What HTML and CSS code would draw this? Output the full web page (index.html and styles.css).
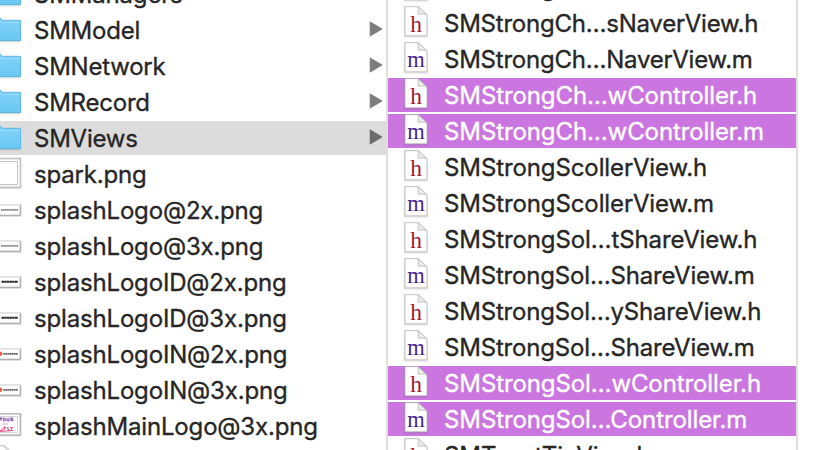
FILE: index.html
```
<!DOCTYPE html>
<html lang="en">
<head>
<meta charset="utf-8">
<title>Files</title>
<link rel="stylesheet" href="styles.css">
</head>
<body>
<svg class="defs" width="0" height="0" aria-hidden="true">
  <defs>
    <linearGradient id="blue" x1="0" y1="0" x2="0" y2="1"><stop offset="0" stop-color="#84d4f9"/><stop offset="1" stop-color="#68c6f3"/></linearGradient>
    <linearGradient id="fold" x1="0" y1="1" x2="1" y2="0"><stop offset="0" stop-color="#e4e4e4"/><stop offset="1" stop-color="#fff"/></linearGradient>
    <symbol id="folder" viewBox="0 0 24 34">
      <path d="M0 28.5H20.5" stroke="#000" stroke-opacity=".13" stroke-width="2"/>
      <path d="M0 5L2.5 7.3H20Q21 7.3 21 8.3V27Q21 28 20 28H0Z" fill="url(#blue)"/>
      <path d="M0 5L2.5 7.3H20.5" fill="none" stroke="#5bb4e0"/>
      <path d="M0 9.5H20.5" stroke="#a0e0fc" stroke-width=".7"/>
      <path d="M20.6 8V27.5H0" fill="none" stroke="#57b2df" stroke-width=".8"/>
    </symbol>
    <symbol id="page" viewBox="0 0 28 34">
      <path d="M4.8 1H18L26.8 9.5V30.5H4.8Z" fill="none" stroke="#000" stroke-opacity=".12" stroke-width="2"/>
      <path d="M5 .7H18.2L27 9.3V29.8H5Z" fill="#fff" stroke="#b9b9b9" stroke-width=".8"/>
      <path d="M18.2 1V8.2H26.2Z" fill="url(#fold)" stroke="#bdbdbd" stroke-width=".8"/>
    </symbol>
    <symbol id="strip" viewBox="0 0 24 34">
      <path d="M0 12.2H20.5V22.8H0" fill="none" stroke="#000" stroke-opacity=".16" stroke-width="2"/>
      <path d="M0 12.5H20V22H0Z" fill="#fff"/>
      <path d="M20.2 12.5V22.2H0" fill="none" stroke="#777" stroke-opacity=".65" stroke-width=".9"/>
    </symbol>
  </defs>
</svg>
<main class="browser">
  <section class="column folders">
    <div class="row"><svg class="thumb"><use href="#folder"/></svg><span class="name">SMManagers</span></div>
    <div class="row"><svg class="thumb"><use href="#folder"/></svg><span class="name tight">SMModel</span><svg class="arrow" viewBox="0 0 12 14"><path d="M1 1L11 7L1 13Z"/></svg></div>
    <div class="row"><svg class="thumb"><use href="#folder"/></svg><span class="name tight">SMNetwork</span><svg class="arrow" viewBox="0 0 12 14"><path d="M1 1L11 7L1 13Z"/></svg></div>
    <div class="row"><svg class="thumb"><use href="#folder"/></svg><span class="name tight">SMRecord</span><svg class="arrow" viewBox="0 0 12 14"><path d="M1 1L11 7L1 13Z"/></svg></div>
    <div class="row current"><svg class="thumb"><use href="#folder"/></svg><span class="name tight">SMViews</span><svg class="arrow" viewBox="0 0 12 14"><path d="M1 1L11 7L1 13Z"/></svg></div>
    <div class="row"><svg class="thumb" viewBox="0 0 24 34"><path d="M0 1.5H20.5V31H0" fill="none" stroke="#000" stroke-opacity=".15" stroke-width="2"/><path d="M0 1.8H20.2V30H0" fill="#fff" stroke="#aaa" stroke-width=".8"/><path d="M0 4.5H17.5V27.5H0" fill="none" stroke="#c4c4c4"/></svg><span class="name">spark.png</span></div>
    <div class="row"><svg class="thumb" viewBox="0 0 24 34"><use href="#strip"/><path d="M1 16.8H18" stroke="#8b8585" stroke-width="1.8" stroke-dasharray="1.7 .3"/></svg><span class="name">splashLogo@2x.png</span></div>
    <div class="row"><svg class="thumb" viewBox="0 0 24 34"><use href="#strip"/><path d="M1 16.8H18" stroke="#8b8585" stroke-width="1.8" stroke-dasharray="1.7 .3"/></svg><span class="name">splashLogo@3x.png</span></div>
    <div class="row"><svg class="thumb" viewBox="0 0 24 34"><use href="#strip"/><path d="M1.5 16.8H18" stroke="#252525" stroke-width="2" stroke-dasharray="2.4 .3"/></svg><span class="name">splashLogoID@2x.png</span></div>
    <div class="row"><svg class="thumb" viewBox="0 0 24 34"><use href="#strip"/><path d="M1.5 16.8H18" stroke="#252525" stroke-width="2" stroke-dasharray="2.4 .3"/></svg><span class="name">splashLogoID@3x.png</span></div>
    <div class="row"><svg class="thumb" viewBox="0 0 24 34"><use href="#strip"/><circle cx="0" cy="16.8" r="2.3" fill="#ef5a48"/><path d="M3.3 16.8H17.7" stroke="#666" stroke-width="1.7" stroke-dasharray="1.8 .3"/></svg><span class="name">splashLogoIN@2x.png</span></div>
    <div class="row"><svg class="thumb" viewBox="0 0 24 34"><use href="#strip"/><circle cx="0" cy="16.8" r="2.3" fill="#ef5a48"/><path d="M3.3 16.8H17.7" stroke="#666" stroke-width="1.7" stroke-dasharray="1.8 .3"/></svg><span class="name">splashLogoIN@3x.png</span></div>
    <div class="row"><svg class="thumb" viewBox="0 0 24 34"><path d="M0 5H20.5V26.5H0" fill="none" stroke="#000" stroke-opacity=".17" stroke-width="2"/><path d="M0 5H20.2V25.8H0" fill="#fff" stroke="#999" stroke-width=".8"/><path d="M0 7.5H17.5V23.5H0" fill="none" stroke="#ccc" stroke-width=".8"/><path d="M0 8.5l1 2.3L2 8.3M4.3 9c-1.3 0-1.5 3 0 3s1.3-3 0-3M7 9v2.6q1.4 1 2-.2V8.7M11 12.3V8.8q2-.1 1.5 1.4l-1.3.6 2 1.2" fill="none" stroke="#9450ad" stroke-width="1.1"/><path d="M2 15h6" stroke="#d792ca" stroke-width=".8"/><path d="M0 21.4q3 .5 2-2.1M4 17.5v4M4 18q3 0 0 2M8.5 18q-2 1-.2 2t-1 1.7M10 18.5h3.2M11.7 18v3.5M0 22.5l13-1" fill="none" stroke="#e15b87" stroke-width="1.1"/></svg><span class="name">splashMainLogo@3x.png</span></div>
    <div class="row"><svg class="thumb" viewBox="0 0 24 34"><path d="M0 .8H5L13 9V30H0" fill="#fff" stroke="#bbb" stroke-width=".9"/><path d="M4 1.2Q7 3 6 8H13Z" fill="#eee" stroke="#c4c4c4" stroke-width=".7"/></svg></div>
  </section>
  <section class="column sources">
    <div class="row"><span class="doc h"><svg><use href="#page"/></svg><b>h</b></span><span class="name">SMStrongCh…erView.h</span></div>
    <div class="row"><span class="doc h"><svg><use href="#page"/></svg><b>h</b></span><span class="name tight">SMStrongCh…sNaverView.h</span></div>
    <div class="row"><span class="doc m"><svg><use href="#page"/></svg><b>m</b></span><span class="name tight">SMStrongCh…NaverView.m</span></div>
    <div class="row picked"><span class="doc h"><svg><use href="#page"/></svg><b>h</b></span><span class="name">SMStrongCh…wController.h</span></div>
    <div class="row picked"><span class="doc m"><svg><use href="#page"/></svg><b>m</b></span><span class="name">SMStrongCh…wController.m</span></div>
    <div class="row"><span class="doc h"><svg><use href="#page"/></svg><b>h</b></span><span class="name">SMStrongScollerView.h</span></div>
    <div class="row"><span class="doc m"><svg><use href="#page"/></svg><b>m</b></span><span class="name">SMStrongScollerView.m</span></div>
    <div class="row"><span class="doc h"><svg><use href="#page"/></svg><b>h</b></span><span class="name">SMStrongSol…tShareView.h</span></div>
    <div class="row"><span class="doc m"><svg><use href="#page"/></svg><b>m</b></span><span class="name snug">SMStrongSol…ShareView.m</span></div>
    <div class="row"><span class="doc h"><svg><use href="#page"/></svg><b>h</b></span><span class="name snug">SMStrongSol…yShareView.h</span></div>
    <div class="row"><span class="doc m"><svg><use href="#page"/></svg><b>m</b></span><span class="name snug">SMStrongSol…ShareView.m</span></div>
    <div class="row picked"><span class="doc h"><svg><use href="#page"/></svg><b>h</b></span><span class="name">SMStrongSol…wController.h</span></div>
    <div class="row picked"><span class="doc m"><svg><use href="#page"/></svg><b>m</b></span><span class="name">SMStrongSol…Controller.m</span></div>
    <div class="row"><span class="doc h"><svg><use href="#page"/></svg><b>h</b></span><span class="name">SMToastTipView.h</span></div>
  </section>
</main>
</body>
</html>
```
FILE: styles.css
```
* { box-sizing: border-box; }
body { margin: 0; background: #fff; color: #262626; font-family: Inter, sans-serif; font-size: 24px; }
.defs { display: block; }
.browser { display: flex; height: 450px; overflow: hidden; }
.column { display: flex; flex: none; flex-direction: column; gap: 2px; height: 520px; border-right: 2px solid #dedede; }
.folders { width: 388px; margin-top: -23px; }
.sources { width: 410px; margin-top: -30px; }
.row { display: flex; align-items: center; flex: none; height: 34px; }
.name { flex: 1; padding-top: 2px; line-height: 34px; white-space: nowrap; letter-spacing: -0.1px; -webkit-text-stroke: .35px currentColor; }
.folders .name { letter-spacing: -0.17px; }
.sources .snug { letter-spacing: -0.18px; }
.row .name.tight { letter-spacing: -0.23px; }
.thumb { flex: none; width: 24px; height: 34px; margin-right: 10px; }
.arrow { flex: none; width: 14px; height: 16px; margin: 0 3px 2px 0; fill: #7d7d7d; stroke: #7d7d7d; stroke-linejoin: round; }
.current { background: #dcdcdc; }
.current .arrow { fill: #6c6c6c; stroke: #6c6c6c; }
.sources .row { padding-left: 12px; }
.doc { display: grid; flex: none; width: 28px; height: 34px; margin-right: 16px; }
.doc > * { grid-area: 1 / 1; }
.doc svg { width: 28px; height: 34px; }
.doc b { padding: 1px 0 0 4px; font: 23.5px/34px "Liberation Serif", serif; text-align: center; }
.h b { color: #a9162f; }
.m b { color: #47258a; font-size: 22.5px; }
.picked { background: #cb76e0; color: #fff; }
```
